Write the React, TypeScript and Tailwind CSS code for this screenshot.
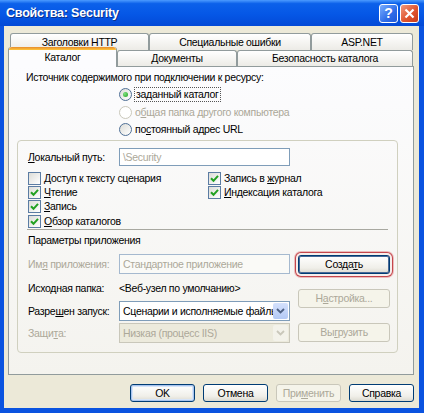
import React from 'react';

const FONT = "font-['Liberation_Sans',Arial,sans-serif]";

const Radio = ({ checked, disabled }: { checked?: boolean; disabled?: boolean }) => (
  <span
    className={`flex h-[13px] w-[13px] shrink-0 items-center justify-center rounded-full border ${
      disabled
        ? 'border-[#cac8bb] bg-white'
        : 'border-[#4f6f96] bg-[linear-gradient(135deg,#dcdcd7,#ffffff)]'
    }`}
  >
    {checked && (
      <span className="h-[5px] w-[5px] rounded-full bg-[radial-gradient(circle_at_35%_35%,#7ee07e,#21a121)]" />
    )}
  </span>
);

const Check = ({ checked }: { checked?: boolean }) => (
  <span className="flex h-[13px] w-[13px] shrink-0 items-center justify-center border border-[#5b7ca3] bg-[linear-gradient(135deg,#dcdcd7,#ffffff)]">
    {checked && (
      <svg width="9" height="9" viewBox="0 0 9 9">
        <path d="M1 4.2 L3.5 6.8 L8 1.8" fill="none" stroke="#21a121" strokeWidth="2" />
      </svg>
    )}
  </span>
);

const Btn = ({
  children,
  disabled,
  className = '',
}: {
  children: React.ReactNode;
  disabled?: boolean;
  className?: string;
}) => (
  <div
    className={`flex items-center justify-center rounded-[3px] border ${
      disabled
        ? 'border-[#c9c7ba] bg-[#f5f4ea] text-[#aca899]'
        : 'border-[#003c74] bg-[linear-gradient(to_bottom,#ffffff,#f0efe9_70%,#dcdad0)] text-black'
    } ${className}`}
  >
    {children}
  </div>
);

const Combo = ({ text, disabled }: { text: string; disabled?: boolean }) => (
  <div
    className={`flex h-[20px] w-[171px] items-center overflow-hidden border ${
      disabled ? 'border-[#c9c7ba] bg-[#eceadc] text-[#aca899]' : 'border-[#7f9db9] bg-white text-black'
    }`}
  >
    <span className="min-w-0 flex-1 overflow-hidden whitespace-nowrap pl-[3px]">{text}</span>
    <span
      className={`mr-px flex h-[16px] w-[15px] shrink-0 items-center justify-center rounded-[2px] ${
        disabled ? 'bg-[#f3f2ea]' : 'bg-[linear-gradient(to_bottom,#d4e1fc,#b3c9f5)]'
      }`}
    >
      <svg width="9" height="6" viewBox="0 0 9 6">
        <path
          d="M1 1 L4.5 4.5 L8 1"
          fill="none"
          stroke={disabled ? '#c9c7ba' : '#4d6185'}
          strokeWidth="1.8"
        />
      </svg>
    </span>
  </div>
);

const Tab = ({ label, className = '' }: { label: string; className?: string }) => (
  <div
    className={`flex items-center justify-center rounded-t-[3px] border border-b-0 border-[#919b9c] bg-[linear-gradient(to_bottom,#ffffff,#ecebe6)] ${className}`}
  >
    {label}
  </div>
);

export default function App() {
  return (
    <div
      className={`${FONT} flex h-[413px] w-[424px] flex-col overflow-hidden bg-[#0a53e0] text-[10.5px] leading-[13px] tracking-[-0.3px] text-black`}
    >
      {/* title bar */}
      <div className="flex h-[26px] shrink-0 items-center bg-[linear-gradient(to_bottom,#4c9bff_0%,#0c61ea_14%,#0557e6_55%,#0349d6_100%)] pl-[6px] pr-[5px]">
        <span className="text-[12.5px] font-bold tracking-[-0.2px] text-white [text-shadow:1px_1px_0_#0a2f8a]">
          Свойства: Security
        </span>
        <div className="ml-auto flex gap-[2px]">
          <div className="flex h-[19px] w-[19px] items-center justify-center rounded-[3px] border border-white bg-[linear-gradient(135deg,#7aaeff,#2f6de8_60%,#1f58d8)] text-[14px] font-bold tracking-normal text-white">
            ?
          </div>
          <div className="flex h-[19px] w-[19px] items-center justify-center rounded-[3px] border border-white bg-[linear-gradient(135deg,#f09a80,#e0552f_55%,#c83b1a)]">
            <svg width="11" height="11" viewBox="0 0 11 11">
              <path d="M1.5 1.5 L9.5 9.5 M9.5 1.5 L1.5 9.5" stroke="white" strokeWidth="2.2" />
            </svg>
          </div>
        </div>
      </div>

      {/* body */}
      <div className="ml-[4px] mr-[5px] mb-[5px] flex flex-1 flex-col bg-[#ece9d8] pl-[4px] pr-[5px] pt-[7px]">
        {/* back tab row */}
        <div className="ml-[2px] flex h-[17px]">
          <Tab label="Заголовки HTTP" className="w-[139px]" />
          <Tab label="Специальные ошибки" className="w-[162px]" />
          <Tab label="ASP.NET" className="w-[102px]" />
        </div>
        {/* front tab row */}
        <div className="-mt-[3px] flex h-[20px] items-end">
          <div className="relative z-10 flex h-[20px] w-[109px] flex-col rounded-t-[3px] border-x border-[#919b9c] bg-[#fcfcfe]">
            <div className="h-[3px] rounded-t-[3px] bg-[linear-gradient(to_bottom,#e68b2c,#ffc73c)]" />
            <div className="flex flex-1 items-start justify-center pt-[1px]">Каталог</div>
          </div>
          <Tab label="Документы" className="mb-px h-[16px] w-[120px]" />
          <Tab label="Безопасность каталога" className="mb-px h-[16px] w-[176px]" />
        </div>

        {/* tab panel */}
        <div className="-mt-px flex h-[309px] flex-col border border-[#919b9c] bg-[linear-gradient(to_bottom,#fcfcfe,#f4f3ee)]">
          <div className="pl-[17px] pt-[4px]">Источник содержимого при подключении к ресурсу:</div>
          <div className="ml-[110px] mt-[1px] flex flex-col">
            <div className="flex h-[18px] items-center gap-[2px]">
              <Radio checked />
              <span className="border border-dotted border-[#555] px-px">
                за<span className="underline">д</span>анный каталог
              </span>
            </div>
            <div className="flex h-[18px] items-center gap-[3px] text-[#aca899]">
              <Radio disabled />
              <span>
                о<span className="underline">б</span>щая папка другого компьютера
              </span>
            </div>
            <div className="flex h-[16px] items-center gap-[3px]">
              <Radio />
              <span>
                по<span className="underline">с</span>тоянный адрес URL
              </span>
            </div>
          </div>

          {/* group box */}
          <div className="ml-[8px] mt-[3px] flex h-[213px] w-[381px] flex-col rounded-[4px] border border-[#d0d0bf]">
            <div className="ml-[10px] mt-[7px] flex h-[18px] items-center">
              <span className="w-[91px]">
                <span className="underline">Л</span>окальный путь:
              </span>
              <div className="flex h-[18px] w-[171px] items-center border border-[#7f9db9] bg-white pl-[3px] text-[#aca899]">
                \Security
              </div>
            </div>

            <div className="ml-[10px] mt-[5px] grid grid-cols-[180px_1fr] grid-rows-[14px_14px_15px_14px]">
              <div className="flex items-center gap-[3px]">
                <Check />
                <span>Доступ к тексту сценария</span>
              </div>
              <div className="flex items-center gap-[3px]">
                <Check checked />
                <span>
                  Запись в <span className="underline">ж</span>урнал
                </span>
              </div>
              <div className="flex items-center gap-[3px]">
                <Check checked />
                <span>
                  <span className="underline">Ч</span>тение
                </span>
              </div>
              <div className="flex items-center gap-[3px]">
                <Check checked />
                <span>
                  <span className="underline">И</span>ндексация каталога
                </span>
              </div>
              <div className="flex items-center gap-[3px]">
                <Check checked />
                <span>
                  <span className="underline">З</span>апись
                </span>
              </div>
              <div />
              <div className="flex items-center gap-[3px]">
                <Check checked />
                <span>
                  <span className="underline">О</span>бзор каталогов
                </span>
              </div>
              <div />
            </div>

            <div className="mx-[9px] mt-px border-t border-[#a8a8a0]" />
            <div className="ml-[10px] mt-[3px] flex h-[14px] items-center">Параметры приложения</div>

            <div className="ml-[10px] mt-[7px] flex gap-[8px]">
              <div className="flex flex-col">
                <div className="flex h-[20px] items-center">
                  <span className="w-[91px] text-[#aca899]">
                    Им<span className="underline">я</span> приложения:
                  </span>
                  <div className="flex h-[20px] w-[171px] items-center border border-[#a5b9cf] bg-[#fafaf7] pl-[3px] text-[#aca899]">
                    Стандартное приложение
                  </div>
                </div>
                <div className="mt-[7px] flex h-[14px] items-center">
                  <span className="w-[91px]">Исходная папка:</span>
                  <span>&lt;Веб-узел по умолчанию&gt;</span>
                </div>
                <div className="mt-[6px] flex h-[20px] items-center">
                  <span className="w-[91px]">
                    Разре<span className="underline">ш</span>ен запуск:
                  </span>
                  <Combo text="Сценарии и исполняемые файлы" />
                </div>
                <div className="mt-[2px] flex h-[20px] items-center">
                  <span className="w-[91px] text-[#aca899]">
                    Защи<span className="underline">т</span>а:
                  </span>
                  <Combo text="Низкая (процесс IIS)" disabled />
                </div>
              </div>

              <div className="flex flex-col">
                <Btn className="mt-px h-[19px] w-[92px] border-[#1c3c64] shadow-[inset_0_0_0_1px_#4a6a96,0_0_0_2px_#f6eeec,0_0_0_3px_#c4464c,0_0_0_4px_#ebbcbc]">
                  <span>
                    Созда<span className="underline">т</span>ь
                  </span>
                </Btn>
                <Btn disabled className="mt-[15px] h-[19px] w-[92px]">
                  <span>
                    Н<span className="underline">а</span>стройка...
                  </span>
                </Btn>
                <Btn disabled className="mt-[15px] h-[19px] w-[92px]">
                  <span>
                    Вы<span className="underline">г</span>рузить
                  </span>
                </Btn>
              </div>
            </div>
          </div>
        </div>

        {/* dialog buttons */}
        <div className="mt-[9px] flex justify-end gap-[8px]">
          <Btn className="h-[18px] w-[65px] shadow-[inset_0_0_0_1px_#a8c4ee,inset_0_0_0_2px_#d6e4f8]">OK</Btn>
          <Btn className="h-[18px] w-[65px]">Отмена</Btn>
          <Btn disabled className="h-[18px] w-[65px]">
            <span>
              При<span className="underline">м</span>енить
            </span>
          </Btn>
          <Btn className="h-[18px] w-[65px]">Справка</Btn>
        </div>
      </div>
    </div>
  );
}
